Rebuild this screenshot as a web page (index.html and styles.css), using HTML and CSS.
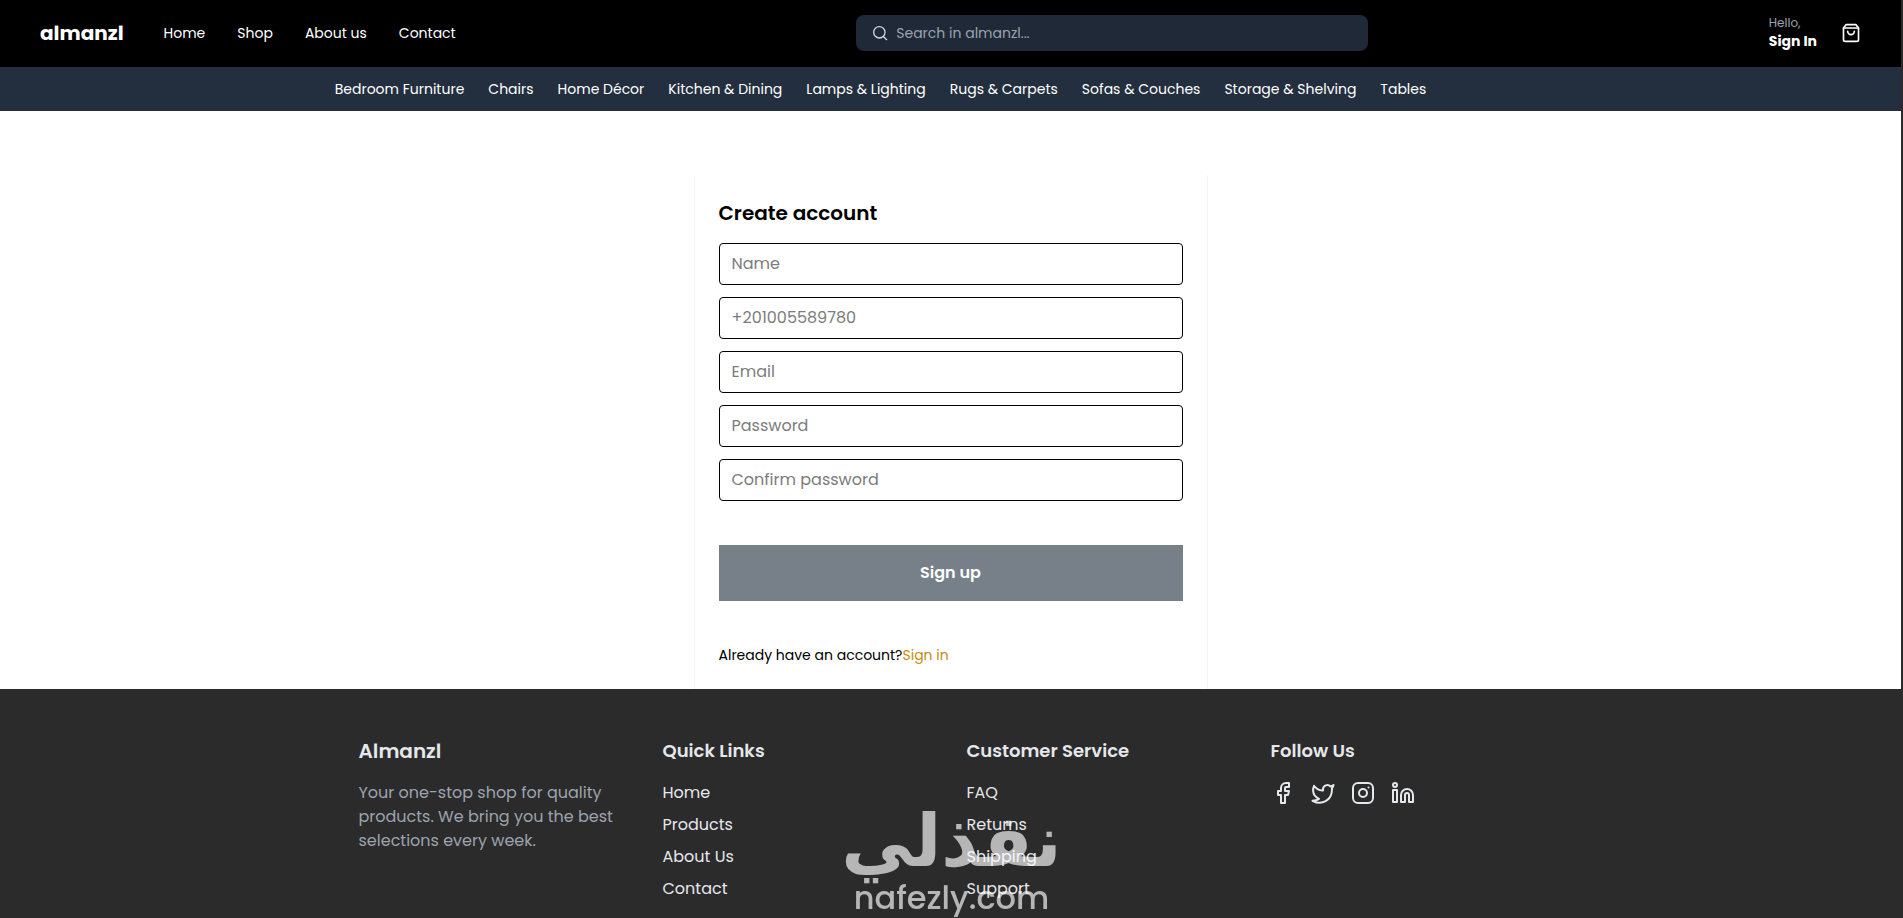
FILE: index.html
```
<!DOCTYPE html>
<html lang="en">

<head>
    <meta charset="utf-8">
    <title>almanzl</title>
    <link rel="stylesheet" href="styles.css">
</head>

<body>
    <header>
        <div class="topbar">
            <div class="topbar-left">
                <a href="#" class="logo">almanzl</a>
                <nav class="main-nav">
                    <a href="#">Home</a>
                    <a href="#">Shop</a>
                    <a href="#">About us</a>
                    <a href="#">Contact</a>
                </nav>
            </div>
            <form class="search">
                <svg width="16" height="16" viewBox="0 0 24 24" fill="none" stroke="currentColor" stroke-width="2" stroke-linecap="round">
                    <circle cx="11" cy="11" r="8.5" />
                    <path d="M17.5 17.5L22 22" />
                </svg>
                <input type="text" placeholder="Search in almanzl..." aria-label="Search in almanzl">
            </form>
            <div class="topbar-right">
                <a href="#" class="account">
                    <span class="hello">Hello,</span>
                    <span class="signin">Sign In</span>
                </a>
                <button class="cart" aria-label="Cart">
                    <svg width="20" height="20" viewBox="0 0 24 24" fill="none" stroke="currentColor" stroke-width="2" stroke-linecap="round" stroke-linejoin="round">
                        <path d="M6 2L3 6v14a2 2 0 0 0 2 2h14a2 2 0 0 0 2-2V6l-3-4z" />
                        <path d="M3 6h18" />
                        <path d="M16 10a4 4 0 0 1-8 0" />
                    </svg>
                </button>
            </div>
        </div>
        <nav class="categories">
            <a href="#">Bedroom Furniture</a>
            <a href="#">Chairs</a>
            <a href="#">Home Décor</a>
            <a href="#">Kitchen &amp; Dining</a>
            <a href="#">Lamps &amp; Lighting</a>
            <a href="#">Rugs &amp; Carpets</a>
            <a href="#">Sofas &amp; Couches</a>
            <a href="#">Storage &amp; Shelving</a>
            <a href="#">Tables</a>
        </nav>
    </header>

    <main>
        <form class="signup">
            <h1>Create account</h1>
            <div class="fields">
                <input type="text" placeholder="Name" aria-label="Name">
                <input type="tel" placeholder="+201005589780" aria-label="Phone">
                <input type="email" placeholder="Email" aria-label="Email">
                <input type="password" placeholder="Password" aria-label="Password">
                <input type="password" placeholder="Confirm password" aria-label="Confirm password">
            </div>
            <button type="submit" class="submit">Sign up</button>
            <p class="have-account">Already have an account?<a href="#">Sign in</a></p>
        </form>
    </main>

    <footer>
        <div class="footer-grid">
            <div>
                <h2 class="brand">Almanzl</h2>
                <p>Your one-stop shop for quality products. We bring you the best selections every week.</p>
            </div>
            <div>
                <h2>Quick Links</h2>
                <ul>
                    <li><a href="#">Home</a></li>
                    <li><a href="#">Products</a></li>
                    <li><a href="#">About Us</a></li>
                    <li><a href="#">Contact</a></li>
                </ul>
            </div>
            <div>
                <h2>Customer Service</h2>
                <ul>
                    <li><a href="#">FAQ</a></li>
                    <li><a href="#">Returns</a></li>
                    <li><a href="#">Shipping</a></li>
                    <li><a href="#">Support</a></li>
                </ul>
            </div>
            <div>
                <h2>Follow Us</h2>
                <div class="social">
                    <a href="#" aria-label="Facebook">
                        <svg viewBox="0 0 24 24"><path d="M18 2h-3a5 5 0 0 0-5 5v3H7v4h3v8h4v-8h3l1-4h-4V7a1 1 0 0 1 1-1h3z" /></svg>
                    </a>
                    <a href="#" aria-label="Twitter">
                        <svg viewBox="0 0 24 24"><path d="M22.5 4c-.9.6-2 1.2-3 1.5a4.3 4.3 0 0 0-7.5 2.9v1A10.2 10.2 0 0 1 3 4.800s-4 9 5 13a11.6 11.6 0 0 1-6.500 2c9 5 19.500 0 19.500-11.500 0-.3 0-.6-.1-.8.8-.9 1.300-2 1.600-3.500z" /></svg>
                    </a>
                    <a href="#" aria-label="Instagram">
                        <svg viewBox="0 0 24 24"><rect x="2" y="2" width="20" height="20" rx="5" /><circle cx="12" cy="12" r="4" /><path d="M17.5 6.5h.01" /></svg>
                    </a>
                    <a href="#" aria-label="LinkedIn">
                        <svg viewBox="0 0 24 24"><circle cx="4" cy="4" r="2" /><rect x="2" y="9" width="4" height="12" /><path d="M16 8a6 6 0 0 1 6 6v7h-4v-7a2 2 0 0 0-4 0v7h-4v-7a6 6 0 0 1 6-6z" /></svg>
                    </a>
                </div>
            </div>
        </div>
    </footer>

    <div class="watermark">
        <span class="watermark-ar" lang="ar" dir="rtl">نفذلي</span>
        <span class="watermark-en">nafezly.com</span>
    </div>
</body>

</html>
```
FILE: styles.css
```
* {
    box-sizing: border-box;
}

body {
    margin: 0;
    height: 100vh;
    overflow: hidden;
    border-right: 2px solid #2b2b2b;
    font-family: Poppins, Inter, sans-serif;
    font-size: 16px;
    line-height: 24px;
    color: #000;
    background-color: #fff;
}

a {
    color: inherit;
    text-decoration: none;
}

h1,
h2,
p,
ul {
    margin: 0;
    padding: 0;
}

input,
button {
    font: inherit;
}

.topbar {
    display: flex;
    justify-content: space-between;
    align-items: center;
    padding: 15px 40px 16px;
    background-color: #000;
    color: #fff;
    font-size: 14px;
}

.topbar-left {
    display: flex;
    align-items: center;
    gap: 40px;
}

.logo {
    font-size: 20px;
    font-weight: 700;
}

.main-nav {
    display: flex;
    gap: 32px;
}

.search {
    display: flex;
    align-items: center;
    gap: 8px;
    width: 512px;
    height: 36px;
    padding: 0 16px;
    border-radius: 8px;
    background-color: #1f2937;
    color: #d1d5db;
}

.search input {
    flex: 1;
    border: none;
    outline: none;
    padding: 0;
    background: none;
    color: #fff;
}

.search input::placeholder {
    color: #9ca3af;
}

.topbar-right {
    display: flex;
    align-items: center;
    gap: 24px;
}

.account {
    display: flex;
    flex-direction: column;
    line-height: 20px;
}

.hello {
    font-size: 12px;
    line-height: 16px;
    color: #9ca3af;
}

.signin {
    font-weight: 700;
}

.cart {
    display: flex;
    padding: 0;
    border: none;
    background: none;
    color: #fff;
}

.categories {
    display: flex;
    justify-content: center;
    gap: 24px;
    padding: 10px 140px 10px 0;
    background-color: #232f3e;
    color: #fff;
    font-size: 14px;
}

main {
    display: flex;
    justify-content: center;
    padding-top: 64px;
}

.signup {
    width: 514px;
    padding: 24px;
    border: 1px solid #f3f4f6;
    border-top: none;
    border-bottom: none;
}

.signup h1 {
    margin-bottom: 16px;
    font-size: 20px;
    font-weight: 600;
    line-height: 28px;
}

.fields {
    display: flex;
    flex-direction: column;
    gap: 12px;
    margin-bottom: 44px;
}

.fields input {
    height: 42px;
    padding: 0 12px 2px;
    border: 1px solid #000;
    border-radius: 4px;
}

.fields input::placeholder {
    color: #7c7c7c;
}

.submit {
    display: block;
    width: 100%;
    height: 56px;
    margin-bottom: 44px;
    border: none;
    background-color: #777f88;
    color: #fff;
    font-weight: 600;
}

.have-account {
    font-size: 14px;
    line-height: 20px;
}

.have-account a {
    color: #c88a12;
}

footer {
    padding: 48px 0;
    background-color: #2b2b2b;
    color: #e5e7eb;
}

.footer-grid {
    display: grid;
    grid-template-columns: repeat(4, 1fr);
    gap: 32px;
    max-width: 1184px;
    margin: 0 auto;
}

footer h2 {
    margin-bottom: 16px;
    font-size: 18px;
    font-weight: 600;
    line-height: 28px;
}

footer .brand {
    font-size: 20px;
}

footer p {
    color: #9ca3af;
}

footer ul {
    display: flex;
    flex-direction: column;
    gap: 8px;
    list-style: none;
}

.social {
    display: flex;
    gap: 16px;
}

.social svg {
    display: block;
    width: 24px;
    height: 24px;
    fill: none;
    stroke: currentColor;
    stroke-width: 2;
    stroke-linecap: round;
    stroke-linejoin: round;
}

.watermark {
    position: fixed;
    right: 0;
    bottom: 0;
    left: 0;
    display: flex;
    flex-direction: column;
    align-items: center;
    color: #fff;
    opacity: 0.66;
    pointer-events: none;
}

.watermark-ar {
    font-family: "DejaVu Sans", sans-serif;
    font-size: 72px;
    font-weight: 700;
    line-height: 74px;
}

.watermark-en {
    font-size: 32px;
    font-weight: 500;
    line-height: 40px;
}
```
